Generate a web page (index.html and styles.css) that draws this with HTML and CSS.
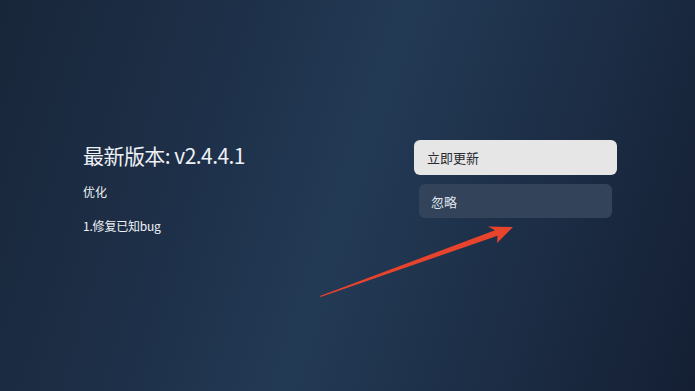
FILE: index.html
```html
<!DOCTYPE html>
<html lang="zh">
<head>
<meta charset="utf-8">
<link rel="stylesheet" href="styles.css">
</head>
<body>
<div class="screen">
  <div class="info">
    <div class="title">最新版本: v2.4.4.1</div>
    <div class="line">优化</div>
    <div class="line notes">1.修复已知bug</div>
  </div>
  <div class="actions">
    <div class="btn primary">立即更新</div>
    <div class="btn secondary">忽略</div>
  </div>
  <svg class="arrow" width="695" height="391" viewBox="0 0 695 391">
    <polygon points="320,296 495,230.2 488,226.5 513,227 497,243 497.5,235.8 320.6,297" fill="#e8432d"/>
  </svg>
</div>
</body>
</html>
```

FILE: styles.css
```css
html, body {
  margin: 0;
  padding: 0;
}
body {
  width: 695px;
  height: 391px;
  overflow: hidden;
  font-family: "Noto Sans CJK SC", "Noto Sans", sans-serif;
}
.screen {
  position: relative;
  width: 695px;
  height: 391px;
  box-sizing: border-box;
  padding: 140px 0 0 83px;
  display: flex;
  align-items: flex-start;
  background: linear-gradient(108deg, #182639 0%, #1e3049 30%, #233a55 50%, #1c2d45 75%, #141f33 100%);
}
.info {
  width: 331px;
  padding-top: 2px;
  color: #eef1f5;
  display: flex;
  flex-direction: column;
}
.title {
  font-size: 21px;
  line-height: 26px;
  letter-spacing: -0.55px;
}
.line {
  font-size: 12px;
  line-height: 16px;
  margin-top: 16px;
}
.line.notes {
  margin-top: 18px;
  letter-spacing: -0.2px;
}
.actions {
  display: flex;
  flex-direction: column;
  align-items: center;
  width: 203px;
  gap: 9px;
}
.btn {
  box-sizing: border-box;
  font-size: 13px;
  display: flex;
  align-items: center;
  border-radius: 6px;
}
.primary {
  width: 203px;
  height: 35px;
  padding-left: 13px;
  background: #e6e6e6;
  color: #262a30;
}
.secondary {
  width: 193px;
  height: 34px;
  padding-left: 12px;
  background: #33435a;
  color: #dfe4ea;
}
.arrow {
  position: absolute;
  left: 0;
  top: 0;
  pointer-events: none;
}
```
